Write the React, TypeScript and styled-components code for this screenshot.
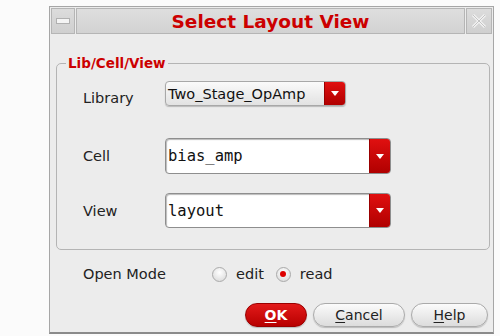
import React from 'react';
import styled, { createGlobalStyle } from 'styled-components';

const Global = createGlobalStyle`
  body {
    margin: 0;
    background: #fbfbfb;
    font-family: "DejaVu Sans", "Liberation Sans", sans-serif;
  }
`;

const Window = styled.div`
  margin: 6px 0 0 49px;
  width: 443px;
  height: 325px;
  border: 1px solid #a6a6a6;
  border-bottom: 2px solid #8a8a8a;
  background: #ececec;
  display: flex;
  flex-direction: column;
`;

const TitleBar = styled.div`
  display: flex;
  height: 26px;
  margin: 1px 1px 0 1px;
  gap: 1px;
`;

const TitleButton = styled.div<{ $w: number }>`
  width: ${p => p.$w}px;
  display: flex;
  align-items: center;
  justify-content: center;
  background: linear-gradient(#dcdcdc, #cfcfcf);
  border: 1px solid #b5b5b5;
  box-sizing: border-box;
`;

const TitleCaption = styled.div`
  flex: 1;
  display: flex;
  align-items: center;
  justify-content: center;
  background: linear-gradient(#dedede, #d2d2d2);
  border: 1px solid #b5b5b5;
  color: #cc0000;
  font-weight: bold;
  font-size: 18.5px;
`;

const Body = styled.div`
  flex: 1;
  display: flex;
  flex-direction: column;
  padding: 22px 3px 0 6px;
`;

const Group = styled.fieldset`
  margin: 0;
  height: 194px;
  box-sizing: border-box;
  border: 1px solid #b4b4b4;
  border-radius: 5px;
  padding: 0 0 0 26px;
  display: grid;
  grid-template-columns: 82px auto;
  align-items: center;
  align-content: start;
`;

const Legend = styled.legend`
  color: #cc0000;
  font-weight: bold;
  font-size: 13.5px;
  padding: 0 2px;
  margin-left: -17px;
  line-height: 14px;
`;

const Label = styled.div<{ $top: number }>`
  font-size: 14.5px;
  color: #222;
  margin-top: ${p => p.$top}px;
`;

const Combo = styled.div<{ $width: number; $height: number; $top: number; $field?: boolean }>`
  margin-top: ${p => p.$top}px;
  width: ${p => p.$width}px;
  height: ${p => p.$height}px;
  box-sizing: border-box;
  display: flex;
  border-radius: 4px;
  border: 1px solid ${p => (p.$field ? '#8e8e8e' : '#a8a8a8')};
  background: ${p => (p.$field ? '#fff' : 'linear-gradient(#fafafa, #e2e2e2)')};
  box-shadow: ${p => (p.$field ? 'inset 1px 1px 1px #bbb' : '0 1px 1px #bbb')};
  overflow: hidden;
`;

const ComboText = styled.div<{ $mono?: boolean }>`
  flex: 1;
  display: flex;
  align-items: center;
  padding-left: 2px;
  color: #111;
  font-size: ${p => (p.$mono ? '15.5px' : '14.5px')};
  font-family: ${p => (p.$mono ? '"DejaVu Sans Mono", monospace' : '"DejaVu Sans", sans-serif')};
`;

const Arrow = styled.div`
  width: 20px;
  display: flex;
  align-items: center;
  justify-content: center;
  background: linear-gradient(#e01010, #b00000);
  border-left: 1px solid #900;
`;

const Tri = () => (
  <svg width="8" height="5" viewBox="0 0 8 5">
    <path d="M0 0 H8 L4 5 Z" fill="#fff" />
  </svg>
);

const ModeRow = styled.div`
  display: flex;
  align-items: center;
  height: 22px;
  margin-top: 13px;
  padding-left: 27px;
  font-size: 14.5px;
  color: #222;
`;

const ModeLabel = styled.div`
  width: 129px;
`;

const RadioItem = styled.div`
  display: flex;
  align-items: center;
  gap: 9px;
  margin-right: 12px;
`;

const Radio = styled.div<{ $on?: boolean }>`
  width: 13px;
  height: 13px;
  border-radius: 50%;
  border: 1px solid #aaa;
  background: radial-gradient(circle at 50% 35%, #fff, #d6d6d6);
  display: flex;
  align-items: center;
  justify-content: center;
  &::after {
    content: '';
    width: 6px;
    height: 6px;
    border-radius: 50%;
    background: ${p => (p.$on ? '#dd0000' : 'transparent')};
  }
`;

const ButtonRow = styled.div`
  display: flex;
  justify-content: flex-end;
  gap: 6px;
  margin-top: 18px;
  padding-right: 2px;
`;

const Button = styled.div<{ $w: number; $primary?: boolean }>`
  width: ${p => p.$w}px;
  height: 24px;
  box-sizing: border-box;
  border-radius: 12px;
  display: flex;
  align-items: center;
  justify-content: center;
  font-size: 14px;
  border: 1px solid ${p => (p.$primary ? '#9a0000' : '#aaa')};
  background: ${p => (p.$primary ? 'linear-gradient(#e21a1a, #b80000)' : 'linear-gradient(#fbfbfb, #dcdcdc)')};
  color: ${p => (p.$primary ? '#fff' : '#222')};
  font-weight: ${p => (p.$primary ? 'bold' : 'normal')};
  box-shadow: 0 1px 1px #bbb;
  & u {
    text-underline-offset: 2px;
  }
`;

export default function App() {
  return (
    <>
      <Global />
      <Window>
        <TitleBar>
          <TitleButton $w={24}>
            <svg width="14" height="6" viewBox="0 0 14 6">
              <rect x="0.5" y="0.5" width="13" height="5" fill="#f4f4f4" stroke="#b0b0b0" />
            </svg>
          </TitleButton>
          <TitleCaption>Select Layout View</TitleCaption>
          <TitleButton $w={26}>
            <svg width="16" height="16" viewBox="0 0 16 16">
              <path d="M2 2 L14 14 M14 2 L2 14" stroke="#f2f2f2" strokeWidth="3" />
              <path d="M2 2 L14 14 M14 2 L2 14" stroke="#c4c4c4" strokeWidth="1" />
            </svg>
          </TitleButton>
        </TitleBar>
        <Body>
          <Group>
            <Legend>Lib/Cell/View</Legend>
            <Label $top={19}>Library</Label>
            <Combo $top={11} $width={181} $height={25}>
              <ComboText>Two_Stage_OpAmp</ComboText>
              <Arrow><Tri /></Arrow>
            </Combo>
            <Label $top={32}>Cell</Label>
            <Combo $top={32} $width={226} $height={36} $field>
              <ComboText $mono>bias_amp</ComboText>
              <Arrow><Tri /></Arrow>
            </Combo>
            <Label $top={19}>View</Label>
            <Combo $top={19} $width={226} $height={35} $field>
              <ComboText $mono>layout</ComboText>
              <Arrow><Tri /></Arrow>
            </Combo>
          </Group>
          <ModeRow>
            <ModeLabel>Open Mode</ModeLabel>
            <RadioItem>
              <Radio />
              <span>edit</span>
            </RadioItem>
            <RadioItem>
              <Radio $on />
              <span>read</span>
            </RadioItem>
          </ModeRow>
          <ButtonRow>
            <Button $w={62} $primary><u>O</u>K</Button>
            <Button $w={92}><u>C</u>ancel</Button>
            <Button $w={77}><u>H</u>elp</Button>
          </ButtonRow>
        </Body>
      </Window>
    </>
  );
}
